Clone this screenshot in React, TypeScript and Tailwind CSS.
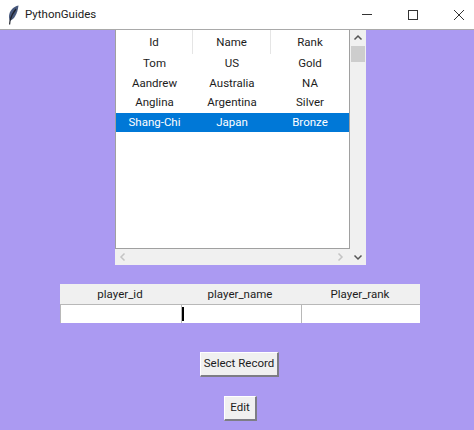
const font = "font-['Roboto','Liberation_Sans',sans-serif]";

const rows = [
  ["Tom", "US", "Gold"],
  ["Aandrew", "Australia", "NA"],
  ["Anglina", "Argentina", "Silver"],
  ["Shang-Chi", "Japan", "Bronze"],
];

function Feather() {
  return (
    <svg width="16" height="22" viewBox="0 0 16 22" className="ml-[6px]">
      <path d="M12.5 1.5 C7 2.5 3 7.5 3 12.5 C3 14.5 3.4 15.8 4 16.8 C8 15.5 11.5 10 12.5 1.5 Z" fill="#47587c" />
      <path d="M10 5 C7.5 8 5 12 4 17 L3.6 20.5" stroke="#1e222b" strokeWidth="1.2" fill="none" />
    </svg>
  );
}

export default function App() {
  return (
    <div className={`${font} w-[474px] h-[430px] overflow-hidden bg-[#ab9af2] flex flex-col text-[11.5px] text-[#1c1c1c]`}>
      <div className="h-[30px] shrink-0 bg-white border-b border-[#a9a9a9] flex items-center">
        <Feather />
        <span className="ml-[3px] text-[#222]">PythonGuides</span>
        <div className="ml-auto flex items-center">
          <svg width="46" height="29" viewBox="0 0 46 29"><path d="M26 14.5h10" stroke="#333" strokeWidth="1" /></svg>
          <svg width="46" height="29" viewBox="0 0 46 29"><rect x="26.5" y="10.5" width="9" height="9" fill="none" stroke="#333" strokeWidth="1" /></svg>
          <svg width="46" height="29" viewBox="0 0 46 29"><path d="M26 10l10 10M36 10l-10 10" stroke="#333" strokeWidth="1" /></svg>
        </div>
      </div>

      <div className="ml-[115px] w-[251px] h-[235px] shrink-0 bg-[#f0f0f0] flex flex-col">
        <div className="flex h-[219px]">
          <div className="w-[235px] bg-white border-l border-r border-b border-[#a0a0a0] flex flex-col">
            <div className="flex h-[24px] shrink-0 items-center">
              <div className="w-[77px] text-center border-r border-[#e5e5e5] h-full leading-[25px]">Id</div>
              <div className="w-[78px] text-center border-r border-[#e5e5e5] h-full leading-[25px]">Name</div>
              <div className="flex-1 text-center leading-[25px]">Rank</div>
            </div>
            {rows.map((r, i) => (
              <div
                key={r[0]}
                className={`flex h-[19.5px] items-center leading-none ${i === 3 ? "bg-[#0078d7] text-white" : ""}`}
              >
                <div className="w-[77px] text-center">{r[0]}</div>
                <div className="w-[78px] text-center">{r[1]}</div>
                <div className="flex-1 text-center">{r[2]}</div>
              </div>
            ))}
          </div>
          <div className="flex-1 flex flex-col items-center">
            <svg width="16" height="16" viewBox="0 0 16 16" className="shrink-0">
              <path d="M4.5 9.5L8 6l3.5 3.5" fill="none" stroke="#555" strokeWidth="1.5" />
            </svg>
            <div className="w-[14px] h-[16px] bg-[#cdcdcd]" />
          </div>
        </div>
        <div className="flex h-[16px] items-center">
          <svg width="16" height="16" viewBox="0 0 16 16">
            <path d="M9.5 4.5L6 8l3.5 3.5" fill="none" stroke="#c4c4c4" strokeWidth="1.5" />
          </svg>
          <svg width="16" height="16" viewBox="0 0 16 16" className="ml-auto mr-[2px]">
            <path d="M6.5 4.5L10 8l-3.5 3.5" fill="none" stroke="#c4c4c4" strokeWidth="1.5" />
          </svg>
          <svg width="16" height="16" viewBox="0 0 16 16">
            <path d="M4.5 6.5L8 10l3.5-3.5" fill="none" stroke="#555" strokeWidth="1.5" />
          </svg>
        </div>
      </div>

      <div className="ml-[60px] mt-[19px] w-[360px] h-[39px] shrink-0 bg-[#f0f0f0] grid grid-cols-3">
        <div className="h-[20px] text-center leading-[21px]">player_id</div>
        <div className="h-[20px] text-center leading-[21px]">player_name</div>
        <div className="h-[20px] text-center leading-[21px]">Player_rank</div>
        <div className="h-[19px] col-span-3 flex">
          <div className="w-[121px] bg-white border-t border-l border-[#b8b8b8]" />
          <div className="w-[120px] bg-white border-t border-l border-[#b8b8b8] relative">
            <div className="absolute left-0 top-[2px] w-[2px] h-[14px] bg-black" />
          </div>
          <div className="flex-1 bg-white border-t border-l border-[#b8b8b8]" />
        </div>
      </div>

      <button className="self-start ml-[200px] mt-[29px] w-[79px] h-[25px] shrink-0 bg-[#f0f0f0] border-t border-l border-t-white border-l-white border-b-2 border-r-2 border-b-[#7d7d85] border-r-[#7d7d85] text-center">
        Select Record
      </button>
      <button className="self-start ml-[224px] mt-[19px] w-[33px] h-[25px] shrink-0 bg-[#f0f0f0] border-t border-l border-t-white border-l-white border-b-2 border-r-2 border-b-[#7d7d85] border-r-[#7d7d85] text-center">
        Edit
      </button>
    </div>
  );
}
